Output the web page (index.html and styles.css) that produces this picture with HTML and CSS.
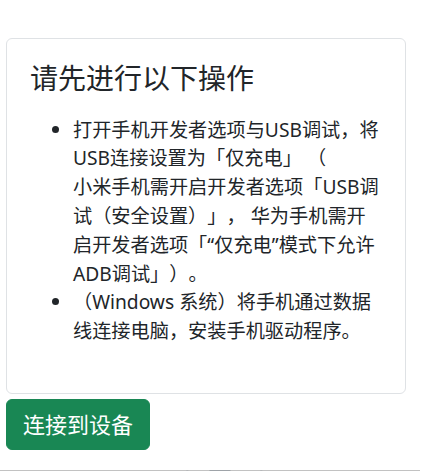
FILE: index.html
```html
<!DOCTYPE html>
<html lang="zh-CN">
<head>
<meta charset="utf-8">
<title>连接到设备</title>
<link rel="stylesheet" href="styles.css">
</head>
<body>
<div class="page">
  <div class="card">
    <h3 class="card-title">请先进行以下操作</h3>
    <ul class="steps">
      <li>打开手机开发者选项与USB调试，将USB连接设置为「仅充电」 （<br>小米手机需开启开发者选项「USB调试（安全设置）」， 华为手机需开启开发者选项「“仅充电”模式下允许ADB调试」）。</li>
      <li>（Windows 系统）将手机通过数据线连接电脑，安装手机驱动程序。</li>
    </ul>
  </div>
  <button class="btn-connect" type="button">连接到设备</button>
  <div class="edge"></div>
</div>
</body>
</html>
```
FILE: styles.css
```css
* { box-sizing: border-box; }
html, body {
  margin: 0;
  padding: 0;
  background: #fff;
}
body {
  font-family: "Segoe UI", "Noto Sans", "Noto Sans CJK SC", sans-serif;
  color: #212529;
  overflow: hidden;
  text-spacing-trim: space-all;
}
.page {
  padding: 38px 0 0 6px;
  display: flex;
  flex-direction: column;
  align-items: flex-start;
}
.card {
  width: 400px;
  border: 1px solid #dfe2e5;
  border-radius: 6px;
  padding: 23px;
}
.card-title {
  margin: 0 0 20px 0;
  font-size: 28px;
  font-weight: 400;
  line-height: 1.2;
}
.steps {
  margin: 0 0 24px 0;
  padding-left: 43px;
  font-size: 19.2px;
  line-height: 1.5;
}
.btn-connect {
  margin-top: 5px;
  font-family: "Segoe UI", "Noto Sans", "Noto Sans CJK SC", sans-serif;
  font-size: 22px;
  line-height: 1.5;
  padding: 8px 16px;
  color: #fff;
  background: #198754;
  border: 1px solid #198754;
  border-radius: 6px;
  text-spacing-trim: space-all;
}
.edge {
  margin: 20px 0 0 -6px;
  width: 421px;
  height: 1px;
  background: linear-gradient(to right, #c2c2c2 0, #c2c2c2 186px, #b0b3b6 187px, #c2c2c2 189px, #c2c2c2 209px, #9ea3a8 210px, #9ea3a8 230px, #c2c2c2 231px, #c2c2c2 260px, #b0b3b6 261px, #c2c2c2 263px, #c2c2c2 420px, #fff 420px);
}
```
